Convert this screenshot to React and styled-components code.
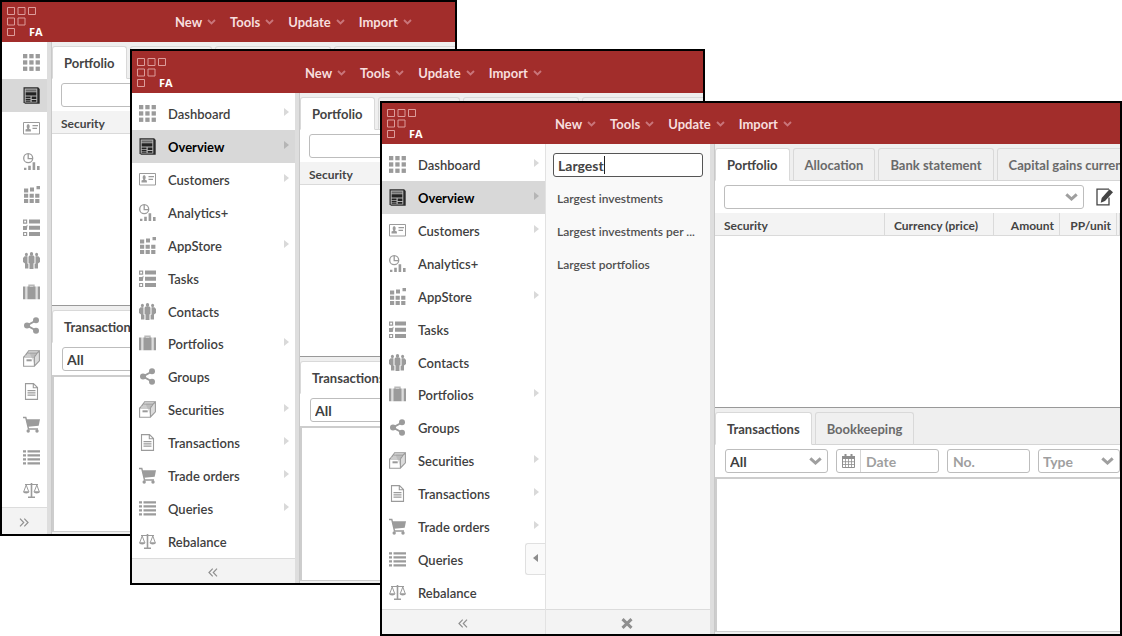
import React from 'react';
import styled, { createGlobalStyle, css } from 'styled-components';

const GlobalStyle = createGlobalStyle`
  *, *::before, *::after { box-sizing: border-box; }
  body { margin: 0; background: #fff; color: #4a4a4a; font-family: Lato, "Liberation Sans", sans-serif; font-size: 13px; }
  button, input, select { font: inherit; color: inherit; margin: 0; }
`;

/* ---------- window frame ---------- */

const Desktop = styled.main`
  display: grid;
  grid-template-columns: minmax(0, 1fr);
  align-items: start;
`;

const Frame = styled.section`
  grid-area: 1 / 1;
  isolation: isolate;
  display: flex;
  flex-direction: column;
  min-height: ${(p) => p.$height}px;
  margin: ${(p) => p.$top}px ${(p) => p.$right}px 0 ${(p) => p.$left}px;
  border: 2px solid #000;
  background: #fff;
  overflow: hidden;
`;

const Header = styled.header`
  display: flex;
  align-items: flex-end;
  height: ${(p) => p.$height}px;
  background: #a22d2b;
`;

const Brand = styled.a`
  display: flex;
  flex: 0 0 173px;
  padding: 0 0 6px 5px;
`;

const MenuBar = styled.nav`
  display: flex;
  gap: 14px;
  padding-bottom: 11px;
`;

const MenuButton = styled.button`
  display: flex;
  align-items: center;
  gap: 5px;
  padding: 0;
  border: 0;
  background: none;
  color: #f7dede;
  font-weight: 700;
  line-height: 18px;
`;

const Body = styled.div`
  display: flex;
  flex: 1;
`;

/* ---------- navigation ---------- */

const Sidebar = styled.aside`
  position: relative;
  display: flex;
  flex-direction: column;
  flex: 0 0 ${(p) => (p.$collapsed ? 45 : 163)}px;
`;

const NavList = styled.ul`
  display: grid;
  grid-template-rows: repeat(14, 1fr);
  height: 465px;
  margin: 0;
  padding: 4px 0 1px;
  list-style: none;
`;

const NavLink = styled.a`
  display: flex;
  align-items: center;
  gap: 12px;
  height: 100%;
  padding: 1px 6px 0 ${(p) => (p.$collapsed ? 21 : 7)}px;
  background: ${(p) => (p.$active ? '#d8d8d8' : 'transparent')};
  color: ${(p) => (p.$active ? '#000' : '#3f3f3f')};
  font-weight: ${(p) => (p.$active ? 700 : 600)};
  text-decoration: none;

  > svg { flex: none; color: ${(p) => (p.$active ? '#333' : '#9b9b9b')}; }
`;

const NavText = styled.span`
  flex: 1;
  padding-top: 1px;
  line-height: 18px;
`;

const Triangle = styled.span`
  border: 4px solid transparent;
  ${(p) => (p.$left
    ? css`border-right: 5px solid #8c8c8c; border-left: 0;`
    : css`border-left: 5px solid ${p.$active ? '#b5b5b5' : '#d9d9d9'}; border-right: 0; margin-bottom: 3px;`)}
`;

const FooterButton = styled.button`
  display: flex;
  flex: 1 0 25px;
  align-items: center;
  justify-content: center;
  padding: 2px 2px 0 0;
  border: 0;
  border-top: 1px solid #dcdcdc;
  background: #f3f3f3;
  color: #8f8f8f;
`;

const PullTab = styled.button`
  position: absolute;
  right: 0;
  bottom: 59px;
  display: flex;
  align-items: center;
  width: 20px;
  height: 32px;
  padding: 0 0 3px 7px;
  border: 1px solid #e0e0e0;
  border-right: 0;
  border-radius: 3px 0 0 3px;
  background: #fafafa;
`;

const SubPanel = styled.div`
  display: flex;
  flex-direction: column;
  flex: 0 0 165px;
  min-width: 0;
  border-left: 1px solid #e2e2e2;
  background: #f9f9f9;
`;

const SubContent = styled.div`
  height: 465px;
  padding: 9px 7px 0;
`;

const SearchBox = styled.label`
  display: flex;
  align-items: center;
  height: 24px;
  padding: 0 4px;
  border: 1px solid #555;
  border-radius: 3px;
  background: #fff;
`;

const SearchInput = styled.input`
  field-sizing: content;
  min-width: 8px;
  max-width: 100%;
  padding: 0;
  border: 0;
  outline: 0;
  background: none;
  color: #444;
  font-size: 14px;
  font-weight: 700;
`;

const Caret = styled.span`
  width: 1px;
  height: 18px;
  background: #222;
`;

const ResultList = styled.ul`
  margin: 5px 0 0;
  padding: 0 4px;
  list-style: none;
`;

const ResultLink = styled.a`
  display: block;
  color: #505050;
  font-size: 12px;
  font-weight: 600;
  line-height: 33px;
  text-decoration: none;
  white-space: nowrap;
`;

/* ---------- content ---------- */

const Content = styled.div`
  display: flex;
  flex: 1 1 0;
  flex-direction: column;
  min-width: 0;
  border-left: 4px solid #dedede;
  box-shadow: inset 1px 0 #c9c9c9;
  padding-left: 1px;
  background: #efefef;
`;

const TabStrip = styled.div`
  display: flex;
  gap: 3px;
  padding-top: 4px;
  overflow: hidden;
  background: #efefef;
  box-shadow: inset 0 -1px #d5d5d5;
`;

const Tab = styled.button`
  flex: none;
  height: 33px;
  padding: 0 11px;
  border: 1px solid #d9d9d9;
  border-bottom-color: ${(p) => (p.$active ? '#fff' : '#d5d5d5')};
  border-radius: 3px 3px 0 0;
  background: ${(p) => (p.$active ? '#fff' : '#f0f0f0')};
  color: ${(p) => (p.$active ? '#444' : '#6a6a6a')};
  font-weight: 700;
  white-space: nowrap;
`;

const Toolbar = styled.div`
  display: flex;
  align-items: center;
  gap: 8px;
  height: 32px;
  padding: 0 0 0 10px;
  overflow: hidden;
  background: #fff;
`;

const PortfolioBar = styled(Toolbar)`
  gap: 12px;
  padding: 0 7px 0 9px;
`;

const Field = styled.div`
  position: relative;
  display: flex;
  align-items: center;
  flex: ${(p) => (p.$width ? `0 0 ${p.$width}px` : '1')};
  height: 24px;
  border: 1px solid #bdbdbd;
  border-radius: 3px;
  background: #fff;

  > svg { position: absolute; right: 5px; color: #9f9f9f; pointer-events: none; }
`;

const Select = styled.select`
  width: 100%;
  height: 100%;
  padding: 0 20px 0 4px;
  border: 0;
  outline: 0;
  appearance: none;
  background: none;
  color: ${(p) => (p.$muted ? '#9f9f9f' : '#3f3f3f')};
  font-size: 14px;
  font-weight: 700;
`;

const TextInput = styled.input`
  width: 100%;
  min-width: 0;
  padding: 0 5px;
  border: 0;
  outline: 0;
  background: none;
  font-size: 14px;
  font-weight: 700;

  &::placeholder { color: #9f9f9f; opacity: 1; }
`;

const CalendarButton = styled.button`
  display: flex;
  flex: 0 0 24px;
  align-items: center;
  justify-content: center;
  height: 100%;
  padding: 0;
  border: 0;
  border-right: 1px solid #d5d5d5;
  background: none;
  color: #8f8f8f;
`;

const IconButton = styled.button`
  display: flex;
  flex: none;
  padding: 0;
  border: 0;
  background: none;
  color: #444;
`;

const TablePane = styled.div`
  height: 195px;
  overflow: hidden;
  border-bottom: 1px solid #999;
  background: #fff;
`;

const Table = styled.table`
  width: 100%;
  border-collapse: separate;
  border-spacing: 0;
  table-layout: fixed;
`;

const HeadCell = styled.th`
  width: ${(p) => (p.$width ? `${p.$width}px` : 'auto')};
  height: 23px;
  padding: ${(p) => (p.$empty ? '0' : p.$align ? '2px 5px 0 0' : '2px 0 0 9px')};
  border-right: 1px solid #dadada;
  border-bottom: 1px solid #dadada;
  background: #f3f3f3;
  color: #444;
  font-size: 12px;
  font-weight: 700;
  text-align: ${(p) => p.$align || 'left'};
  white-space: nowrap;
`;

const ResultPane = styled.div`
  flex: 1;
  margin-bottom: 2px;
  border: solid #cdcdcd;
  border-width: 2px 0 1px 2px;
  background: #fff;
`;

/* ---------- icons ---------- */

const Svg = ({ w = 17, h = 17, children }) => (
  <svg width={w} height={h} viewBox={`0 0 ${w} ${h}`} fill="currentColor" aria-hidden="true">{children}</svg>
);

const MenuChevron = () => (
  <Svg w={9} h={6}><path d="M1 1 4.500 4.500 8 1" fill="none" stroke="#c9757a" strokeWidth="1.900" /></Svg>
);

const SelectChevron = () => (
  <Svg w={13} h={8}><path d="M1.300 1.300 6.500 6 11.700 1.300" fill="none" stroke="currentColor" strokeWidth="3" /></Svg>
);

const Logo = () => (
  <svg width="38" height="29" viewBox="0 0 38 29" role="img" aria-label="FA">
    <g fill="none" stroke="#dc9c9b">
      <path d="M.5.5h7v7h-7zM11 .5h7v7h-7zM21.500 .5h7v7h-7zM.5 11h7v7h-7zM11 11h7v7h-7zM.5 21.500h7v7h-7z" />
    </g>
    <text x="22" y="29" fill="#fff" fontFamily="Open Sans, sans-serif" fontSize="11" fontWeight="700">FA</text>
  </svg>
);

const grid3 = [0, 6.3, 12.6];

const icons = {
  Dashboard: <Svg>{grid3.map((y) => grid3.map((x) => <rect key={`${x}-${y}`} x={x} y={y} width="4.3" height="4.3" />))}</Svg>,
  Overview: (
    <Svg>
      <path d="M.5.3h14.700l1.500 1.800v14.600H2L.5 15.300z" fill="#2a2a2a" />
      <path d="M1.700 1.500h12.600v14H1.700z" fill="#b4b4b4" />
      <path d="M2.700 2.500h10.600v2H2.700z" fill="#6a6a6a" />
      <path d="M2.700 5.300h10.600v3.200H2.700zM2.700 9.500h4.800V11H2.700zM2.700 11.700h4.800v1.200H2.700zM2.700 13.600h4.800v1.200H2.700zM8.700 9.500h4.600V12H8.700zM8.700 12.900h4.600v1.900H8.700z" fill="#222" />
    </Svg>
  ),
  Customers: (
    <Svg>
      <path d="M.5 2.500h16v11.500H.5z" fill="none" stroke="currentColor" />
      <path d="M2.500 11.500v-2l1.900-.8C3.200 6.800 3.600 4.300 5.200 4.300s2 2.500.8 4.400l1.900.8v2zM9.500 5H15v1.200H9.500zM9.500 7.700H14v1.200H9.500z" />
    </Svg>
  ),
  'Analytics+': (
    <Svg>
      <circle cx="5.200" cy="5.200" r="4.500" fill="none" stroke="currentColor" strokeWidth="1.300" />
      <path d="M5.200 1v4.600h4.600" fill="none" stroke="currentColor" strokeWidth="1.300" />
      <path d="M1 14.800h2.400V17H1zM5.200 12.800h2.600V17H5.200zM9.600 9.300h2.600V17H9.600zM14 13h2.600v4H14z" />
    </Svg>
  ),
  AppStore: (
    <Svg>
      <path d="M1 2.600h4.200v4H1zM7 1.500h4v4H7zM13.500 0H17v3.300h-3.500zM1 7.700h4.200v4H1zM6.600 7.700h4.200v4H6.600zM12.200 7.700h4.200v4h-4.200zM1 13h4.200v4H1zM6.600 13h4.200v4H6.600zM12.200 13h4.200v4h-4.200z" />
    </Svg>
  ),
  Tasks: (
    <Svg>
      <path d="M6 .5h11v4H6zM6 6.700h11v4H6zM6 13h11v4H6z" />
      <path d="M.6 1.100h3v3h-3zM.6 13.500h3v3h-3z" fill="none" stroke="currentColor" strokeWidth="1.200" />
      <path d="M0 7h3l1.600-1.300L3.800 11H0z" />
    </Svg>
  ),
  Contacts: (
    <Svg>
      <ellipse cx="8.500" cy="2" rx="1.700" ry="2" />
      <ellipse cx="3.400" cy="2.600" rx="1.500" ry="1.800" />
      <ellipse cx="13.600" cy="2.600" rx="1.500" ry="1.800" />
      <path d="M6.500 3.500h4l1 1.300v6.400h-1V17H6.500v-5.800h-1V4.800zM1.600 4.200h2.900v7.500h.9V16.500H2v-5L0 10V6zM15.400 4.200h-2.900v7.500h-.9v4.800H15v-5l2-1.500V6z" />
    </Svg>
  ),
  Portfolios: (
    <Svg>
      <path d="M6 3V1.200h5V3" fill="none" stroke="currentColor" strokeWidth="1.400" opacity=".7" />
      <path d="M0 2.500h2.300v12.800H0zM4.400 2.500h8.200v12.800H4.400zM14.700 2.500H17v12.800h-2.300z" />
      <path d="M2.300 2.500h2.100v12.800H2.300zM12.600 2.500h2.100v12.800h-2.100z" opacity=".35" />
    </Svg>
  ),
  Groups: (
    <Svg>
      <path d="M13 3.500 4 8.500l9 5" fill="none" stroke="currentColor" strokeWidth="2" />
      <circle cx="13" cy="3.300" r="3" />
      <circle cx="4" cy="8.500" r="3" />
      <circle cx="13" cy="13.700" r="3" />
    </Svg>
  ),
  Securities: (
    <Svg>
      <path d="M5.500.5h11v10l-4.500 5z" opacity=".35" />
      <path d="M.6 7h10.800v9.300H.6zM.8 7l1.700-2h10.300l-1.400 2M2.700 4.800l1.200-1.700h10.200l-1.200 1.900M4.300 2.900 5.600.8h10.800L14.200 3M16.400 1v9.800l-5 5.200" fill="none" stroke="currentColor" strokeWidth="1.100" />
      <path d="M3.500 9.300h5.200v2H3.500z" />
    </Svg>
  ),
  Transactions: (
    <Svg>
      <path d="M2.500.6h8l4 4v11.800h-12zM10.300.8v4h4" fill="none" stroke="currentColor" strokeWidth="1.100" />
      <path d="M4.500 7h8v1.200h-8zM4.500 9.300h8v1.200h-8zM4.500 11.600h8v1.200h-8z" />
    </Svg>
  ),
  'Trade orders': (
    <Svg>
      <path d="M0 1.500h2.800L5.500 13H15" fill="none" stroke="currentColor" strokeWidth="1.400" />
      <path d="M3 3.200h14l-1.300 6.600-10.600 1z" />
      <circle cx="5.200" cy="15" r="1.700" />
      <circle cx="14" cy="15" r="1.700" />
    </Svg>
  ),
  Queries: (
    <Svg>
      <path d="M0 1.300h3v2.200H0zM4.500 1.300H17v2.200H4.500zM0 5.300h3v2.200H0zM4.500 5.300H17v2.200H4.500zM0 9.300h3v2.200H0zM4.500 9.300H17v2.200H4.500zM0 13.300h3v2.200H0zM4.500 13.300H17v2.200H4.500z" />
    </Svg>
  ),
  Rebalance: (
    <Svg>
      <path d="M2 2.500h13M3.200 3 .8 9.500M3.200 3l2.500 6.500M13.800 3l-2.500 6.500M13.800 3l2.400 6.500" fill="none" stroke="currentColor" />
      <path d="M0 9.300h6.400c0 3-6.400 3-6.400 0zM10.600 9.300H17c0 3-6.400 3-6.400 0zM5 14.600h7V16H5zM7.700 1h1.600v14H7.700z" />
    </Svg>
  ),
};

const DoubleChevron = ({ right }) => (
  <Svg w={10} h={9}>
    <path d={right ? 'M1 .7 4.700 4.500 1 8.300M5.300.7 9 4.500 5.300 8.300' : 'M4.700.7 1 4.500 4.700 8.300M9 .7 5.300 4.500 9 8.300'} fill="none" stroke="currentColor" strokeWidth="1.200" />
  </Svg>
);

const Cross = () => (
  <Svg w={12} h={11}><path d="M1.500 1.200l9 8.600M10.500 1.200l-9 8.600" fill="none" stroke="currentColor" strokeWidth="3" /></Svg>
);

const CalendarIcon = () => (
  <Svg w={13} h={14}>
    <path d="M.5 3h12v10.500H.5z" fill="none" stroke="currentColor" />
    <path d="M0 2h13v3H0zM2.500 0h2v3h-2zM8.500 0h2v3h-2z" />
    <path d="M3.500 5v8.500M6.500 5v8.500M9.500 5v8.500M.5 7.700h12M.5 10.500h12" fill="none" stroke="currentColor" strokeWidth=".8" />
  </Svg>
);

const EditIcon = () => (
  <Svg w={17} h={18}>
    <path d="M13 9.500v7.300H1V1.200h12" fill="none" stroke="currentColor" strokeWidth="1.300" />
    <path d="M13.500 1.300 17 4.300l-8 8.700-4.300 1.700 1-4.700z" />
  </Svg>
);

/* ---------- composition ---------- */

const MENUS = ['New', 'Tools', 'Update', 'Import'];
const NO_CHILDREN = ['Analytics+', 'Tasks', 'Contacts', 'Groups', 'Queries', 'Rebalance'];
const RESULTS = ['Largest investments', 'Largest investments per ...', 'Largest portfolios'];

function Navigation({ collapsed, searching }) {
  return (
    <Sidebar $collapsed={collapsed}>
      <NavList>
        {Object.keys(icons).map((name) => {
          const active = name === 'Overview';
          const arrow = !NO_CHILDREN.includes(name) || (name === 'Queries' && !searching);
          return (
            <li key={name}>
              <NavLink href="#" $active={active} $collapsed={collapsed} aria-label={name}>
                {icons[name]}
                {!collapsed && <NavText>{name}</NavText>}
                {!collapsed && arrow && <Triangle $active={active} />}
              </NavLink>
            </li>
          );
        })}
      </NavList>
      <FooterButton aria-label={collapsed ? 'Expand menu' : 'Collapse menu'}>
        <DoubleChevron right={collapsed} />
      </FooterButton>
      {searching && <PullTab aria-label="Hide panel"><Triangle $left /></PullTab>}
    </Sidebar>
  );
}

function ViewSearch() {
  return (
    <SubPanel>
      <SubContent>
        <SearchBox>
          <SearchInput aria-label="Search views" defaultValue="Largest" />
          <Caret />
        </SearchBox>
        <ResultList>
          {RESULTS.map((r) => <li key={r}><ResultLink href="#">{r}</ResultLink></li>)}
        </ResultList>
      </SubContent>
      <FooterButton aria-label="Close search"><Cross /></FooterButton>
    </SubPanel>
  );
}

function Workspace() {
  return (
    <Content>
      <TabStrip>
        <Tab $active>Portfolio</Tab>
        <Tab>Allocation</Tab>
        <Tab>Bank statement</Tab>
        <Tab>Capital gains current</Tab>
      </TabStrip>
      <PortfolioBar>
        <Field>
          <Select aria-label="Portfolio"><option /></Select>
          <SelectChevron />
        </Field>
        <IconButton aria-label="Edit"><EditIcon /></IconButton>
      </PortfolioBar>
      <TablePane>
        <Table>
          <thead>
            <tr>
              <HeadCell>Security</HeadCell>
              <HeadCell $width={109}>Currency (price)</HeadCell>
              <HeadCell $width={66} $align="right">Amount</HeadCell>
              <HeadCell $width={57} $align="right">PP/unit</HeadCell>
              <HeadCell as="td" $width={3} $empty />
            </tr>
          </thead>
        </Table>
      </TablePane>
      <TabStrip>
        <Tab $active>Transactions</Tab>
        <Tab>Bookkeeping</Tab>
      </TabStrip>
      <Toolbar>
        <Field $width={103}>
          <Select aria-label="Status"><option>All</option></Select>
          <SelectChevron />
        </Field>
        <Field $width={103}>
          <CalendarButton aria-label="Pick a date"><CalendarIcon /></CalendarButton>
          <TextInput aria-label="Date" placeholder="Date" />
        </Field>
        <Field $width={83}>
          <TextInput aria-label="Number" placeholder="No." />
        </Field>
        <Field $width={82}>
          <Select $muted aria-label="Type"><option>Type</option></Select>
          <SelectChevron />
        </Field>
      </Toolbar>
      <ResultPane />
    </Content>
  );
}

function AppWindow({ top, left, right, height, headerHeight, collapsed, searching }) {
  return (
    <Frame $top={top} $left={left} $right={right} $height={height}>
      <Header $height={headerHeight}>
        <Brand href="#"><Logo /></Brand>
        <MenuBar>
          {MENUS.map((m) => <MenuButton key={m}>{m}<MenuChevron /></MenuButton>)}
        </MenuBar>
      </Header>
      <Body>
        <Navigation collapsed={collapsed} searching={searching} />
        {searching && <ViewSearch />}
        <Workspace />
      </Body>
    </Frame>
  );
}

export default function App() {
  return (
    <>
      <GlobalStyle />
      <Desktop>
        <AppWindow top={0} left={0} right={665} height={536} headerHeight={40} collapsed />
        <AppWindow top={49} left={130} right={417} height={536} headerHeight={42} />
        <AppWindow top={101} left={380} right={0} height={535} headerHeight={41} searching />
      </Desktop>
    </>
  );
}
